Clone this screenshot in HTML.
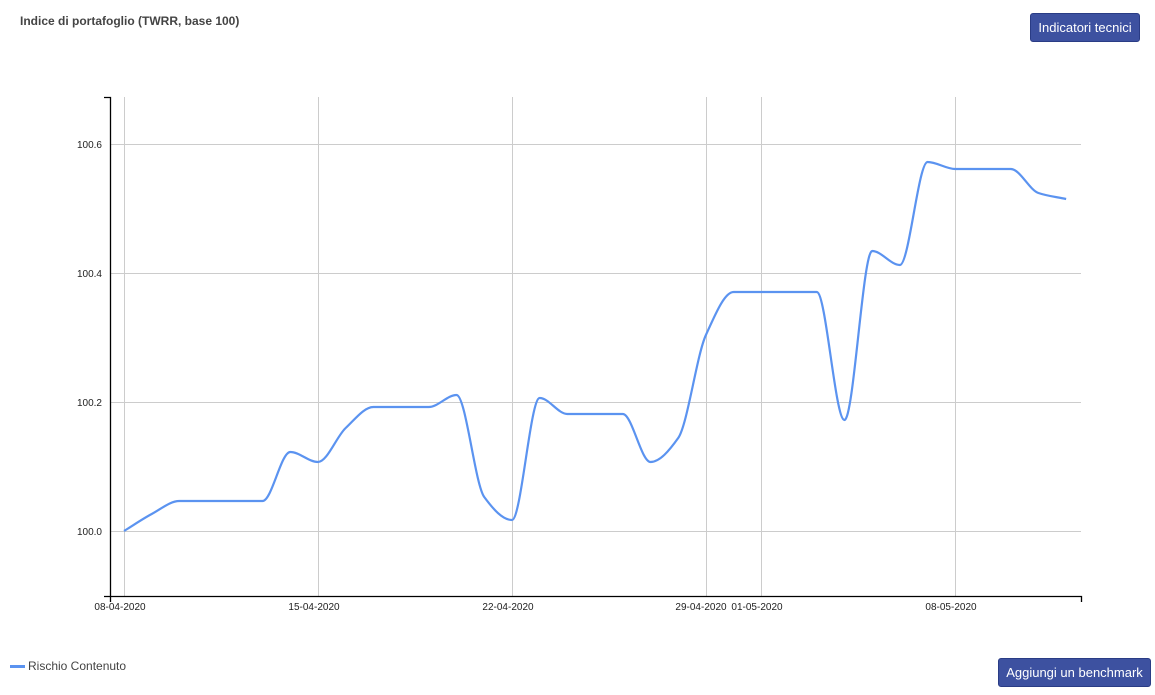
<!DOCTYPE html>
<html><head><meta charset="utf-8"><style>
html,body{margin:0;padding:0;background:#fff;width:1155px;height:695px;overflow:hidden;font-family:"Liberation Sans",Arial,sans-serif}
.title{position:absolute;left:20px;top:14px;font-size:12px;font-weight:bold;color:#444}
.btn{position:absolute;background:#3d51a0;border:1px solid #2a3c85;border-radius:3px;color:#fff;font-size:13px;text-align:center;box-sizing:border-box}
.leg{position:absolute;left:10px;top:659px;font-size:12px;color:#444}
.leg span{display:inline-block;width:15px;height:3px;background:#5b93f0;vertical-align:middle;margin-right:3px;margin-top:-1px}
</style></head><body>
<div class="title">Indice di portafoglio (TWRR, base 100)</div>
<div class="btn" style="left:1030px;top:13px;width:110px;height:29px;line-height:27px">Indicatori tecnici</div>
<svg width="1155" height="695" style="position:absolute;left:0;top:0" font-family="Liberation Sans, Arial, sans-serif" font-size="10">
<g stroke="#ccc" stroke-width="1">
<line x1="110" y1="144.5" x2="1081" y2="144.5"/><line x1="110" y1="273.5" x2="1081" y2="273.5"/><line x1="110" y1="402.5" x2="1081" y2="402.5"/><line x1="110" y1="531.5" x2="1081" y2="531.5"/>
<line x1="124.5" y1="97" x2="124.5" y2="596"/><line x1="318.5" y1="97" x2="318.5" y2="596"/><line x1="512.5" y1="97" x2="512.5" y2="596"/><line x1="706.5" y1="97" x2="706.5" y2="596"/><line x1="761.5" y1="97" x2="761.5" y2="596"/><line x1="955.5" y1="97" x2="955.5" y2="596"/>
</g>
<g stroke="#000" stroke-width="1.3" fill="none">
<polyline points="104,97.5 110.5,97.5 110.5,602"/>
<polyline points="104,596.5 1081.5,596.5 1081.5,602"/>
</g>
<g fill="#222" text-anchor="end"><text x="102" y="148">100.6</text><text x="102" y="277">100.4</text><text x="102" y="406">100.2</text><text x="102" y="535">100.0</text></g>
<g fill="#222" text-anchor="middle"><text x="120" y="610">08-04-2020</text><text x="314" y="610">15-04-2020</text><text x="508" y="610">22-04-2020</text><text x="701" y="610">29-04-2020</text><text x="757" y="610">01-05-2020</text><text x="951" y="610">08-05-2020</text></g>
<path id="ln" d="" stroke="#5b93f0" stroke-width="2.2" fill="none"/>
</svg>
<div class="leg"><span></span>Rischio Contenuto</div>
<div class="btn" style="left:998px;top:658px;width:153px;height:29px;line-height:27px">Aggiungi un benchmark</div>
<script>
var ys=[531,514,501,501,501,501,452,462,428,407,407,407,395,497,520,398,414,414,414,462,438,335,292,292,292,292,420,251,265,162,169,169,169,193,199];
var P=ys.map(function(y,i){return [124+i*27.71,y]});
var n=P.length,d=[],m=[];
for(var i=0;i<n-1;i++)d.push((P[i+1][1]-P[i][1])/(P[i+1][0]-P[i][0]));
for(var i=0;i<n;i++){
 if(i==0)m.push(d[0]);else if(i==n-1)m.push(d[n-2]);
 else{ if(d[i-1]*d[i]<=0)m.push(0); else {var h=27.71;m.push(3*d[i-1]*d[i]/(d[i-1]+2*d[i])*0+ (2*d[i-1]*d[i]/(d[i-1]+d[i])));} }
}
var s="M"+P[0][0]+","+P[0][1];
for(var i=0;i<n-1;i++){var h=(P[i+1][0]-P[i][0])/3;
 s+=" C"+(P[i][0]+h)+","+(P[i][1]+m[i]*h)+" "+(P[i+1][0]-h)+","+(P[i+1][1]-m[i+1]*h)+" "+P[i+1][0]+","+P[i+1][1];}
document.getElementById("ln").setAttribute("d",s);
</script>
</body></html>
